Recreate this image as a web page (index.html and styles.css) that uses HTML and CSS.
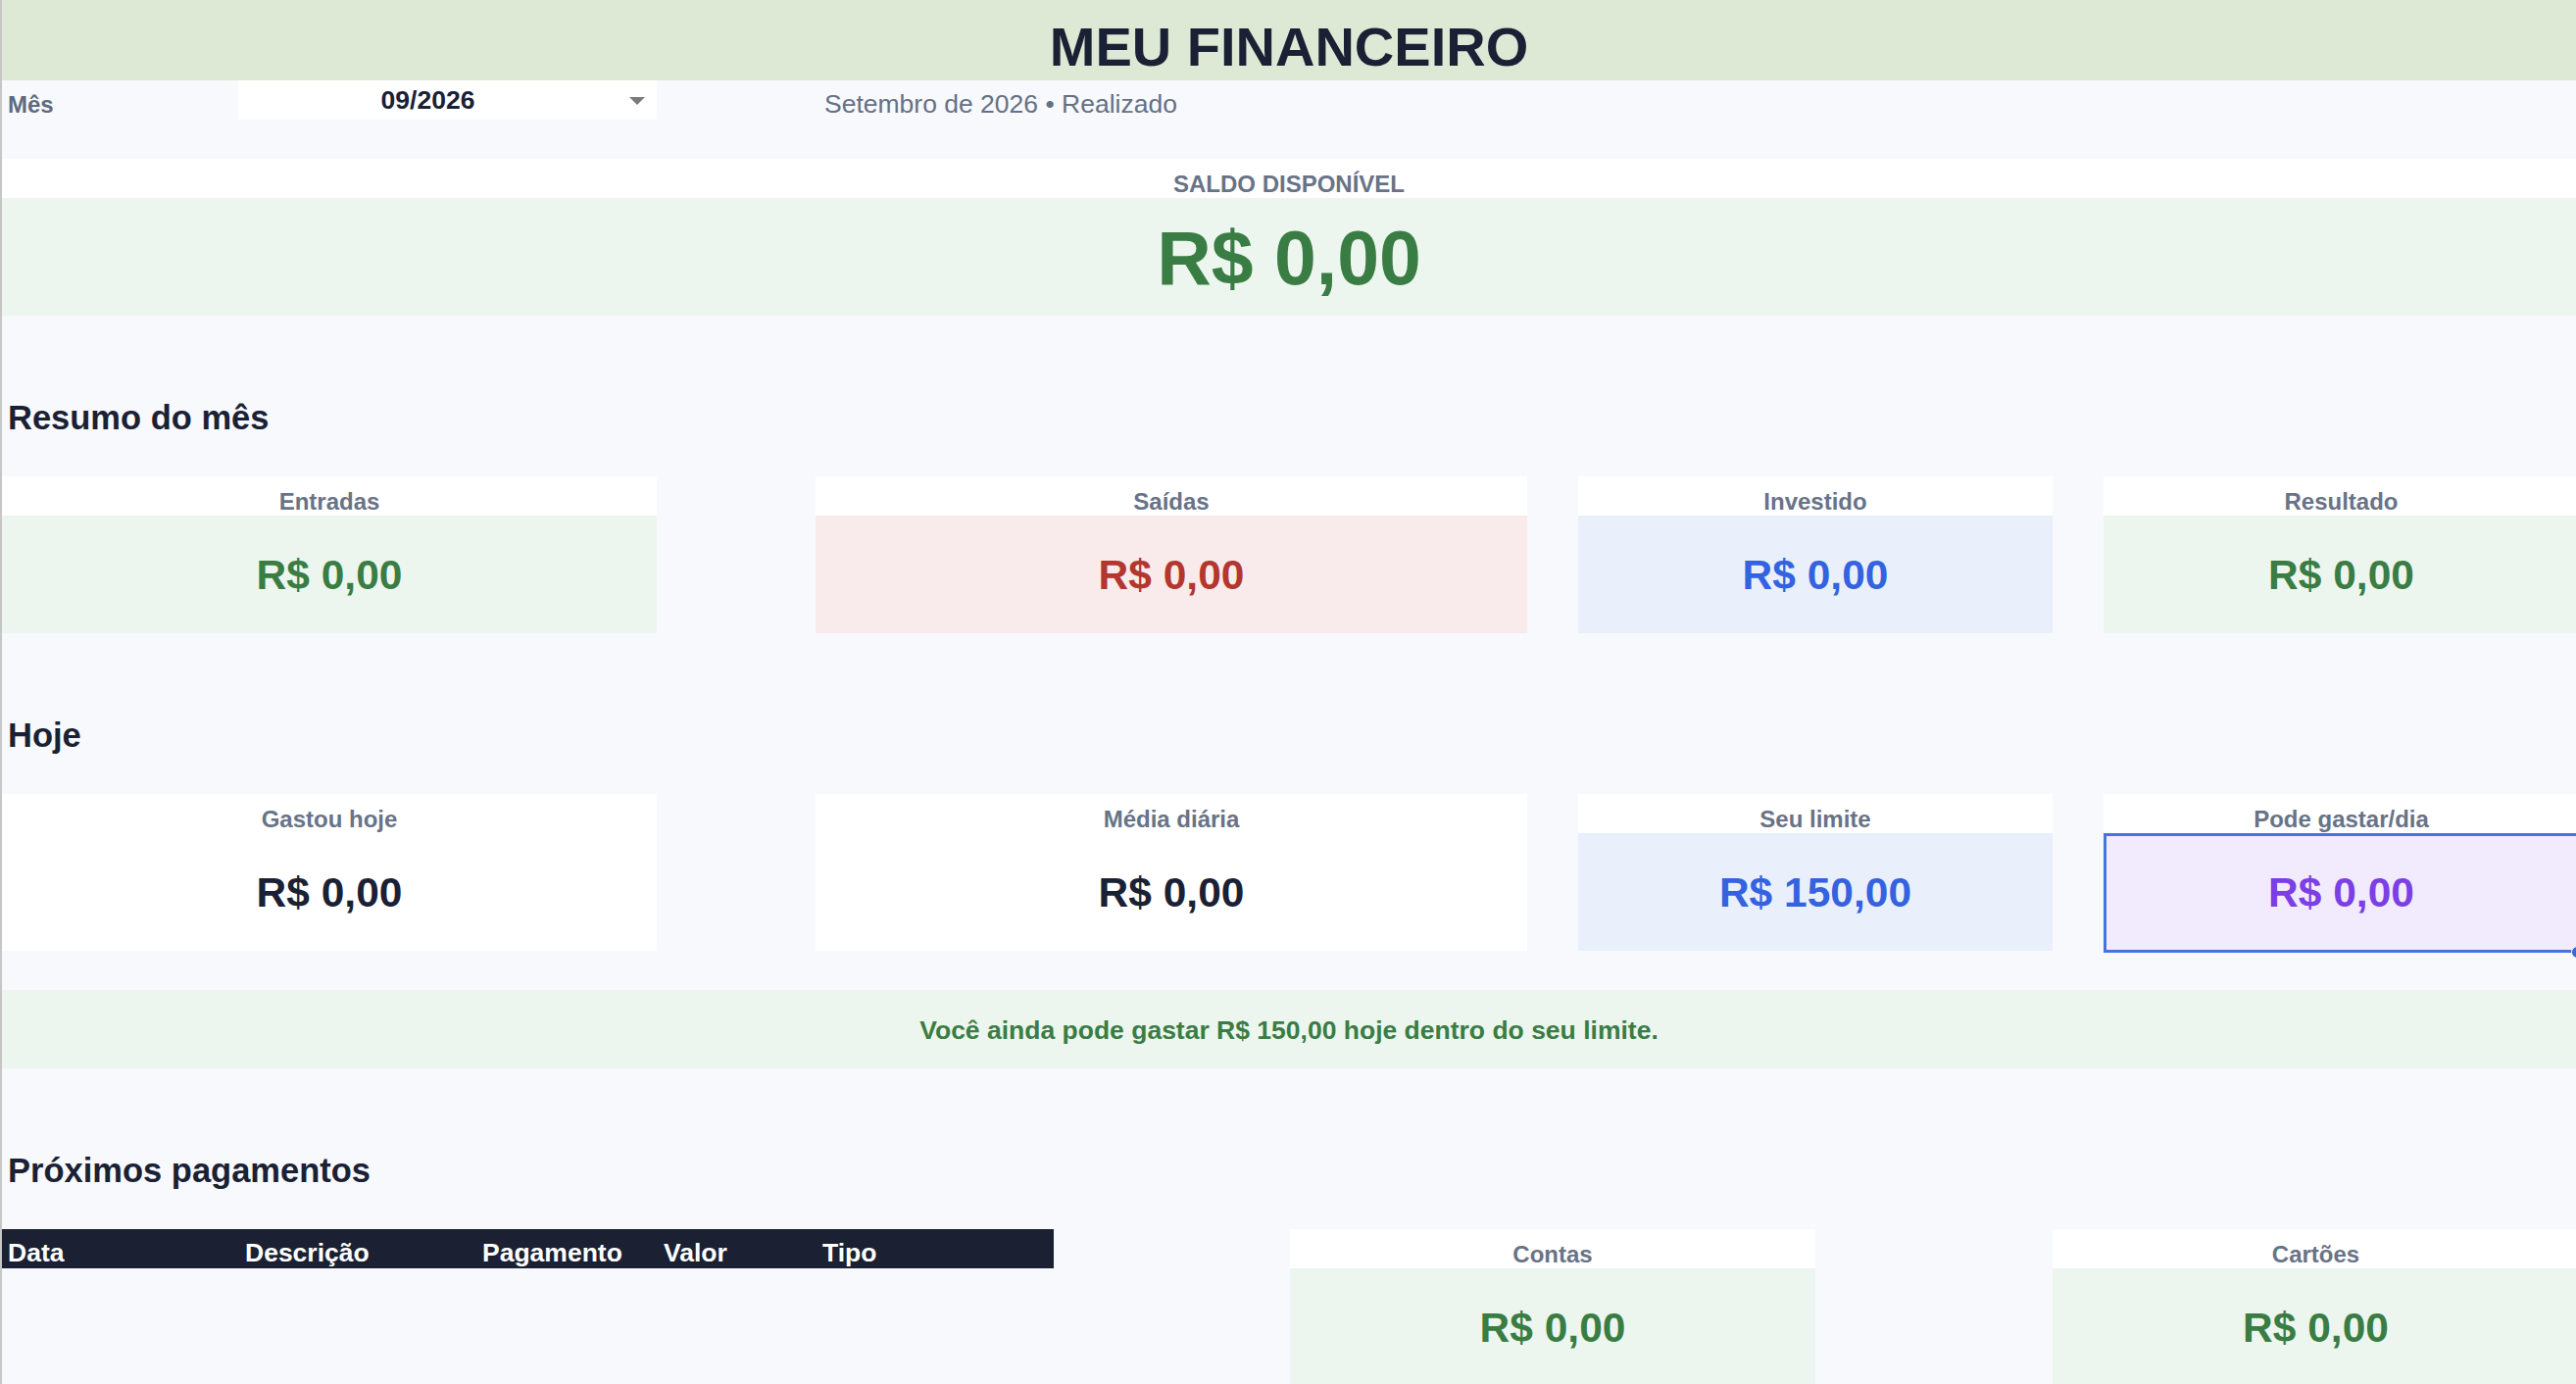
FILE: index.html
```html
<!DOCTYPE html>
<html lang="pt-BR">
<head>
<meta charset="utf-8">
<title>Meu Financeiro</title>
<link rel="stylesheet" href="styles.css">
</head>
<body>
<div class="sheet">
  <header class="title-bar"><h1>MEU FINANCEIRO</h1></header>

  <div class="grid month-row">
    <div class="cell cell-bottom month-label">Mês</div>
    <div class="dropdown">09/2026<span class="caret"></span></div>
    <div class="cell cell-bottom subtitle">Setembro de 2026 • Realizado</div>
  </div>
  <div class="spacer"></div>

  <section class="saldo">
    <div class="band-label">SALDO DISPONÍVEL</div>
    <div class="saldo-value">R$ 0,00</div>
  </section>

  <h2 class="section-title">Resumo do mês</h2>
  <div class="grid cards">
    <div class="card span-ac">
      <div class="card-label">Entradas</div>
      <div class="card-value green">R$ 0,00</div>
    </div>
    <div class="card span-eg">
      <div class="card-label">Saídas</div>
      <div class="card-value red">R$ 0,00</div>
    </div>
    <div class="card span-ij">
      <div class="card-label">Investido</div>
      <div class="card-value blue">R$ 0,00</div>
    </div>
    <div class="card span-l">
      <div class="card-label">Resultado</div>
      <div class="card-value green">R$ 0,00</div>
    </div>
  </div>

  <h2 class="section-title">Hoje</h2>
  <div class="grid cards">
    <div class="card span-ac">
      <div class="card-label">Gastou hoje</div>
      <div class="card-value plain">R$ 0,00</div>
    </div>
    <div class="card span-eg">
      <div class="card-label">Média diária</div>
      <div class="card-value plain">R$ 0,00</div>
    </div>
    <div class="card span-ij">
      <div class="card-label">Seu limite</div>
      <div class="card-value blue">R$ 150,00</div>
    </div>
    <div class="card span-l">
      <div class="card-label">Pode gastar/dia</div>
      <div class="card-value purple selected">R$ 0,00<span class="handle"></span></div>
    </div>
  </div>
  <div class="spacer"></div>
  <div class="message">Você ainda pode gastar R$ 150,00 hoje dentro do seu limite.</div>

  <h2 class="section-title">Próximos pagamentos</h2>
  <div class="grid cards">
    <div class="table-head span-ae">
      <div class="th">Data</div>
      <div class="th">Descrição</div>
      <div class="th">Pagamento</div>
      <div class="th">Valor</div>
      <div class="th">Tipo</div>
    </div>
    <div class="card span-gi">
      <div class="card-label">Contas</div>
      <div class="card-value green">R$ 0,00</div>
    </div>
    <div class="card span-kl">
      <div class="card-label">Cartões</div>
      <div class="card-value green">R$ 0,00</div>
    </div>
  </div>
</div>
</body>
</html>
```
FILE: styles.css
```css
* { box-sizing: border-box; }
html, body { margin: 0; padding: 0; }
body {
  width: 2628px;
  height: 1412px;
  overflow: hidden;
  background: #f7f9fc;
  font-family: "Liberation Sans", Arial, sans-serif;
  color: #1b2134;
}
.sheet {
  border-left: 2px solid #c6c6c6;
  min-height: 1412px;
}
.grid {
  display: grid;
  grid-template-columns: 241px 242px 185px 162px 243px 241px 242px 52px 242px 242px 52px 485px;
}

/* title */
.title-bar {
  height: 82px;
  background: #dee9d5;
  display: flex;
  justify-content: center;
  align-items: flex-end;
  padding-bottom: 6px;
}
.title-bar h1 {
  margin: 0;
  font-size: 56px;
  line-height: 1;
  font-weight: 700;
  color: #1b2134;
}

/* month row */
.month-row { height: 40px; }
.cell { padding: 0 7px; white-space: nowrap; }
.cell-bottom { display: flex; align-items: flex-end; padding-bottom: 1px; }
.month-label {
  grid-column: 1 / 2;
  font-size: 24px;
  font-weight: 700;
  color: #5f6a7e;
  padding-left: 6px;
}
.dropdown {
  grid-column: 2 / 4;
  position: relative;
  background: #ffffff;
  display: flex;
  align-items: center;
  justify-content: center;
  padding-right: 40px;
  font-size: 26.5px;
  font-weight: 700;
  color: #1b2134;
}
.caret {
  position: absolute;
  right: 12px;
  top: 17px;
  width: 0;
  height: 0;
  border-left: 8px solid transparent;
  border-right: 8px solid transparent;
  border-top: 8px solid #7a7a7a;
}
.subtitle {
  grid-column: 5 / 9;
  font-size: 26.5px;
  color: #667085;
  padding-left: 9px;
  padding-bottom: 0;
}
.spacer { height: 40px; }

/* saldo */
.band-label {
  height: 40px;
  background: #ffffff;
  display: flex;
  justify-content: center;
  align-items: flex-end;
  padding-bottom: 0;
  font-size: 24px;
  font-weight: 700;
  color: #687387;
}
.saldo-value {
  height: 120px;
  background: #ecf6ee;
  display: flex;
  justify-content: center;
  align-items: center;
  padding-top: 2px;
  font-size: 77px;
  line-height: 1;
  font-weight: 700;
  color: #3a7d44;
}

/* section titles */
.section-title {
  margin: 0;
  height: 164px;
  display: flex;
  align-items: flex-end;
  padding: 0 7px 40px 6px;
  font-size: 34.5px;
  font-weight: 700;
  color: #1b2134;
}

/* cards */
.cards { height: 160px; }
.span-ac { grid-column: 1 / 4; }
.span-eg { grid-column: 5 / 8; }
.span-ij { grid-column: 9 / 11; }
.span-l  { grid-column: 12 / 13; }
.span-ae { grid-column: 1 / 6; }
.span-gi { grid-column: 7 / 10; }
.span-kl { grid-column: 11 / 13; }

.card { display: flex; flex-direction: column; }
.card-label {
  height: 40px;
  background: #ffffff;
  display: flex;
  justify-content: center;
  align-items: flex-end;
  padding-bottom: 0;
  font-size: 24px;
  font-weight: 700;
  color: #687387;
  white-space: nowrap;
}
.card-value {
  height: 120px;
  display: flex;
  justify-content: center;
  align-items: center;
  padding-top: 2px;
  font-size: 42.5px;
  line-height: 1;
  font-weight: 700;
  white-space: nowrap;
}
.green  { background: #ecf6ee; color: #3a7d44; }
.red    { background: #f9ebeb; color: #b3362f; }
.blue   { background: #e9f0fb; color: #3562df; }
.purple { background: #f2eafd; color: #7b3fe4; }
.plain  { background: #ffffff; color: #1b2134; }

.selected { position: relative; }
.selected::after {
  content: "";
  position: absolute;
  left: 0;
  top: 0;
  right: 0;
  bottom: -2px;
  border: 3px solid #4574e1;
  pointer-events: none;
}
.handle {
  position: absolute;
  right: -5px;
  bottom: -8px;
  width: 13px;
  height: 13px;
  border-radius: 50%;
  background: #3b67d8;
  border: 1px solid #ffffff;
  z-index: 2;
}

/* message */
.message {
  height: 80px;
  background: #ecf6ee;
  display: flex;
  justify-content: center;
  align-items: center;
  padding-top: 2px;
  font-size: 26.5px;
  font-weight: 700;
  color: #3a7d44;
}

/* table */
.table-head {
  height: 40px;
  background: #1b2133;
  display: grid;
  grid-template-columns: 241px 242px 185px 162px 243px;
}
.th {
  display: flex;
  align-items: flex-end;
  padding: 0 7px 0;
  font-size: 26.5px;
  font-weight: 700;
  color: #ffffff;
  white-space: nowrap;
}
.th:first-child { padding-left: 6px; }
```
